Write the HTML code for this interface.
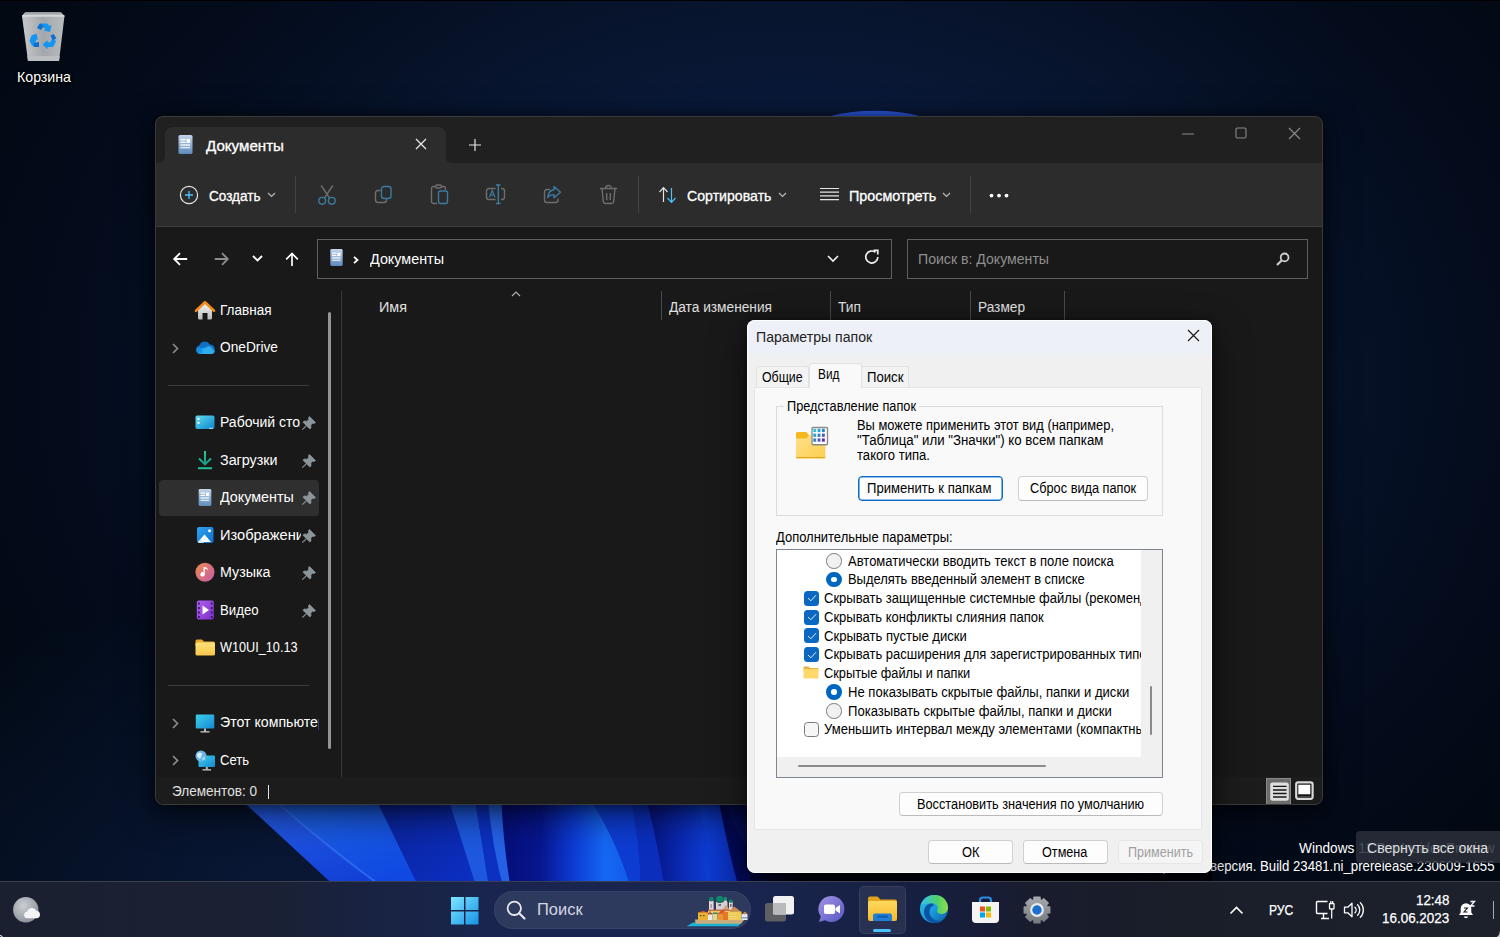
<!DOCTYPE html>
<html lang="ru">
<head>
<meta charset="utf-8">
<title>Параметры папок</title>
<style>
*{box-sizing:border-box;margin:0;padding:0}
html,body{width:1500px;height:937px;overflow:hidden;background:#050b1e}
body{position:relative;font-family:"Liberation Sans",sans-serif;font-size:14px;color:#fff}
.abs{position:absolute}
.pg{position:absolute;width:1500px;height:937px}
.t{position:absolute;white-space:nowrap;line-height:1;transform-origin:0 0}
svg{position:absolute;overflow:visible}
#desk{position:absolute;left:0;top:0;width:1500px;height:937px;overflow:hidden;
 background:radial-gradient(ellipse 520px 300px at 280px 900px,rgba(16,38,88,.5),rgba(16,38,88,0) 100%),radial-gradient(ellipse 900px 700px at 790px 380px,#0c2049 0%,#0a1a3b 35%,#07132a 58%,#040c1d 78%,#020913 100%)}
#win{position:absolute;left:155px;top:116px;width:1168px;height:689px;background:#191919;border-radius:8px;overflow:hidden;
 box-shadow:0 10px 34px rgba(0,0,0,.6),0 0 14px rgba(0,0,0,.45)}
#win:after{content:"";position:absolute;left:0;top:0;right:0;bottom:0;border:1px solid #3a3a3a;border-radius:8px;pointer-events:none}
.vsep{position:absolute;width:1px;background:#434343}
.box{position:absolute;border:1px solid #5f5f5f;background:#191919}
#dlg{position:absolute;left:747px;top:320px;width:465px;height:553px;background:#f0f0f0;border-radius:8px;overflow:hidden;color:#000;
 box-shadow:0 14px 36px rgba(0,0,0,.55),0 0 10px rgba(0,0,0,.35)}
#dlg:after{content:"";position:absolute;left:0;top:0;right:0;bottom:0;border:1px solid #fdfdfd;border-radius:8px;pointer-events:none}
.btn{position:absolute;background:#fdfdfd;border:1px solid #d0d0d0;border-bottom-color:#bababa;border-radius:4px}
.cb{position:absolute;width:15px;height:15px;border-radius:3.500px;background:#0a68c2}
.cb0{position:absolute;width:15px;height:15px;border-radius:3.500px;background:#f6f6f6;border:1px solid #7a7a7a}
.rd{position:absolute;width:15.500px;height:15.500px;border-radius:50%;background:#fff;border:5px solid #0067c0}
.rd0{position:absolute;width:15.500px;height:15.500px;border-radius:50%;background:#f1f1f1;border:1px solid #7d7d7d}
#taskbar{position:absolute;left:0;top:881px;width:1500px;height:56px;overflow:hidden;
 background:linear-gradient(90deg,#1b2030 0%,#1a2134 18%,#192240 24%,#19254e 32%,#19254e 50%,#171f40 62%,#181c2d 69%,#1a1e29 78%,#1c212c 100%);border-top:1px solid #3a3f4c}
</style>
</head>
<body>
<div id="desk">
<svg class="abs" style="left:0;top:0" width="1500" height="937" viewBox="0 0 1500 937">
<defs>
<linearGradient id="w1" x1="0" y1="0" x2=".6" y2="1"><stop offset="0" stop-color="#2660e6"/><stop offset="1" stop-color="#1240d6"/></linearGradient>
<linearGradient id="w2" x1="0" y1="0" x2=".5" y2="1"><stop offset="0" stop-color="#1f64e2"/><stop offset="1" stop-color="#1049e2"/></linearGradient>
<linearGradient id="w3" x1="0" y1="0" x2="1" y2="1"><stop offset="0" stop-color="#0a2296"/><stop offset="1" stop-color="#0c30c6"/></linearGradient>
<linearGradient id="w6" x1="0" y1="0" x2="1" y2="0"><stop offset="0" stop-color="#050e78"/><stop offset=".3" stop-color="#07168e"/><stop offset=".55" stop-color="#0c3ad2"/><stop offset=".8" stop-color="#1668f4"/><stop offset="1" stop-color="#1259ea"/></linearGradient>
<linearGradient id="w9" x1="0" y1="0" x2="1" y2="0"><stop offset="0" stop-color="#06127e"/><stop offset=".55" stop-color="#0a2ab4"/><stop offset="1" stop-color="#0e40d6"/></linearGradient>
<linearGradient id="w10" x1="0" y1="0" x2="1" y2="0"><stop offset="0" stop-color="#0e3fd6"/><stop offset="1" stop-color="#0a2cb4"/></linearGradient>
<linearGradient id="wp5" x1="0" y1="0" x2="0" y2="1"><stop offset="0" stop-color="#2a63ee"/><stop offset="1" stop-color="#0c2fb0"/></linearGradient>
</defs>
<path d="M241.5 800 L1205 800 L1205 937 L380 937 L339 890 Z" fill="#0a2aae"/>
<path d="M241.5 800 Q290.2 845 339.0 890 L386.4 890 Q324.4 845 274.5 800Z" fill="url(#w1)"/>
<path d="M274.5 800 Q324.4 845 386.4 890 L420.3 890 Q398.4 845 376.5 800Z" fill="url(#w2)"/>
<path d="M274.5 800 Q324.4 845 386.4 890" stroke="#3270f2" stroke-width="2" fill="none" opacity=".8"/>
<path d="M376.5 800 Q398.4 845 420.3 890 L477.2 890 Q463.0 845 448.8 800Z" fill="url(#w3)"/>
<path d="M448.8 800 Q463.0 845 477.2 890 L489.6 890 Q482.3 845 475.0 800Z" fill="#1d58de"/>
<path d="M475.0 800 Q482.3 845 489.6 890 L503.8 890 Q495.9 845 488.0 800Z" fill="#0c30c0"/>
<path d="M488.0 800 Q491.9 845 503.8 890 L511.0 890 Q506.2 845 501.4 800Z" fill="#2461e4"/>
<path d="M501.4 800 Q503.2 845 511.0 890 L631.5 890 Q619.1 845 590.8 800Z" fill="url(#w6)"/>
<path d="M590.8 800 Q619.1 845 631.5 890 L641.0 890 Q640.2 845 631.4 800Z" fill="#0d3cd2"/>
<path d="M631.4 800 Q640.2 845 641.0 890 L665.0 890 Q657.9 845 646.8 800Z" fill="#0b2fbc"/>
<path d="M646.8 800 Q657.9 845 665.0 890 L712.5 890 Q705.8 845 699.0 800Z" fill="url(#w9)"/>
<path d="M699.0 800 Q705.8 845 712.5 890 L739.3 890 Q729.0 845 718.6 800Z" fill="url(#w10)"/>
<path d="M718.600 800 Q727 845 739.300 890 L1205 890 L1205 800Z" fill="#030a58"/><path d="M724 800 L760 800 L760 860 Q735 835 724 800Z" fill="#050f60"/>
<linearGradient id="wsh" x1="0" y1="0" x2="1" y2="0"><stop offset="0" stop-color="rgba(2,4,40,.6)"/><stop offset=".1" stop-color="rgba(0,0,10,.92)"/><stop offset="1" stop-color="rgba(0,0,6,.96)"/></linearGradient><rect x="750" y="868" width="462" height="14" fill="url(#wsh)"/>
<ellipse cx="875" cy="127.500" rx="60" ry="16.800" fill="#2a57e2"/>
</svg>
<div class="abs" style="left:0;top:0;width:1500px;height:1px;background:#000"></div>
</div>
<svg style="left:20px;top:10px" width="46" height="54" viewBox="0 0 46 54">
<defs><linearGradient id="bin1" x1="0" y1="0" x2="1" y2="0"><stop offset="0" stop-color="#c6c9cc"/><stop offset=".5" stop-color="#a3a7ab"/><stop offset="1" stop-color="#b9bcbf"/></linearGradient>
<linearGradient id="bin2" x1="0" y1="0" x2="0" y2="1"><stop offset="0" stop-color="#8e9397"/><stop offset="1" stop-color="#c9ccd0"/></linearGradient></defs>
<path d="M2 6 L5.500 2 H40.500 L44.500 6 L39 51 H8 Z" fill="url(#bin1)"/>
<path d="M5.500 2 H40.500 L44.500 6 H2 Z" fill="url(#bin2)"/>
<path d="M7.300 46 H39.700 L39 51 H8 Z" fill="#bcbfc2"/>
<path d="M2 6 H44.500" stroke="#e6e8ea" stroke-width="1"/>
<g fill="#1496f0">
<path d="M17 18l3-4.500h7l3 2.500 1.500-1-1.500 7-6.500-1.500 2-1.200-2-2h-3.500z"/>
<path d="M11.500 25.500l5-2 1.500 6.500-1.800-.8-.7 3 2 3.500h-5.500l-2.500-5z"/>
<path d="M33 27l3 4.500-3 5.500h-5.500v2.200l-5-4.700 5-4.500v2.300h3l1-2.500z"/>
</g>
<g fill="#0a6fd0"><path d="M17 18l3-4.500 3.500 2.500-2.500 4z"/><path d="M14 33l5-1v5h-5.500z"/><path d="M30.500 25.500l3-1.500 3 4.500-4 1.500z"/></g>
</svg>
<span class="t" style="left:16.5px;top:69.7px;font-size:14.5px;color:#fff;transform:scaleX(0.9777);text-shadow:0 1px 2px #000,0 0 3px rgba(0,0,0,.9),1px 1px 1px #000;">Корзина</span>
<div id="win"><div class="pg" style="left:-155px;top:-116px">
<div class="abs" style="left:155px;top:116px;width:1168px;height:47px;background:#202020"></div>
<div class="abs" style="left:165px;top:127px;width:281px;height:37px;background:#2c2c2c;border-radius:8px 8px 0 0"></div>
<svg style="left:157px;top:155px" width="296" height="8" viewBox="0 0 296 8"><path d="M0 8h8V0q0 8-8 8z" fill="#2c2c2c"/><path d="M296 8h-8V0q0 8 8 8z" fill="#2c2c2c"/></svg>
<div class="abs" style="left:155px;top:163px;width:1168px;height:64px;background:#2c2c2c;border-bottom:1px solid #3c3c3c"></div>
<svg style="left:177px;top:133.500px" width="17" height="21" viewBox="0 0 17 21"><defs><linearGradient id="dg" x1="0" y1="0" x2="0" y2="1"><stop offset="0" stop-color="#c3d5ea"/><stop offset="1" stop-color="#5d8abb"/></linearGradient></defs><rect x="1.500" y="1" width="14" height="19" rx="1.600" fill="url(#dg)"/><rect x="3.5" y="5" width="5" height="1.3" fill="#fff"/><rect x="3.5" y="7.6" width="5" height="1.3" fill="#fff"/><rect x="9.5" y="5" width="3.5" height="3.9" fill="#fff"/><rect x="3.5" y="10.4" width="9.5" height="1.3" fill="#fff"/><rect x="3.5" y="13" width="9.5" height="1.3" fill="#fff" opacity=".8"/></svg>
<span class="t" style="left:206.0px;top:138.6px;font-size:14px;color:#fff;transform:scaleX(1.0808);-webkit-text-stroke:.3px #fff;">Документы</span>
<svg style="left:415px;top:138px" width="12" height="12" viewBox="0 0 12 12"><path d="M1 1l10 10M11 1L1 11" stroke="#e8e8e8" stroke-width="1.3" fill="none"/></svg>
<svg style="left:468px;top:138px" width="14" height="14" viewBox="0 0 14 14"><path d="M7 1v12M1 7h12" stroke="#e8e8e8" stroke-width="1.2" fill="none"/></svg>
<svg style="left:1182px;top:133px" width="12" height="2" viewBox="0 0 12 2"><path d="M0 1h12" stroke="#8a8a8a" stroke-width="1.2"/></svg>
<svg style="left:1235px;top:127px" width="12" height="12" viewBox="0 0 12 12"><rect x="1" y="1" width="10" height="10" rx="1.5" stroke="#8a8a8a" stroke-width="1.1" fill="none"/></svg>
<svg style="left:1288px;top:127px" width="13" height="13" viewBox="0 0 13 13"><path d="M1 1l11 11M12 1L1 12" stroke="#8a8a8a" stroke-width="1.1" fill="none"/></svg>
<svg style="left:179px;top:185px" width="20" height="20" viewBox="0 0 20 20"><circle cx="10" cy="10" r="8.6" stroke="#e4e4e4" stroke-width="1.2" fill="none"/><path d="M10 6v8M6 10h8" stroke="#4cc2ff" stroke-width="1.3" fill="none"/></svg>
<span class="t" style="left:208.5px;top:188.8px;font-size:14px;color:#fff;transform:scaleX(0.9677);-webkit-text-stroke:.3px #fff;">Создать</span>
<svg style="left:267px;top:192px" width="9" height="6" viewBox="0 0 9 6"><path d="M1 1l3.5 3.5L8 1" stroke="#b8b8b8" stroke-width="1.2" fill="none"/></svg>
<div class="vsep" style="left:295px;top:176px;height:37px"></div>
<svg style="left:318px;top:184px" width="18" height="21" viewBox="0 0 18 21"><path d="M3.200 1.500L11.600 14.200M14.800 1.500L6.400 14.200" stroke="#6e6e6e" stroke-width="1.400" fill="none"/><circle cx="4.200" cy="16.800" r="3.400" stroke="#3a7ba2" stroke-width="1.400" fill="none"/><circle cx="13.800" cy="16.800" r="3.400" stroke="#3a7ba2" stroke-width="1.400" fill="none"/></svg>
<svg style="left:374px;top:185px" width="19" height="19" viewBox="0 0 19 19"><path d="M6.500 5.500H4a2.500 2.500 0 0 0-2.500 2.500v7A2.500 2.500 0 0 0 4 17.500h6a2.500 2.500 0 0 0 2.500-2.500v-1" stroke="#6e6e6e" stroke-width="1.400" fill="none"/><rect x="7.500" y="1.500" width="9.500" height="12" rx="2.500" stroke="#3a7ba2" stroke-width="1.400" fill="none"/></svg>
<svg style="left:430px;top:184px" width="19" height="21" viewBox="0 0 19 21"><path d="M7 19.500H3.500a2 2 0 0 1-2-2v-13a2 2 0 0 1 2-2h2M11.500 2.500h2a2 2 0 0 1 2 2V6" stroke="#6e6e6e" stroke-width="1.400" fill="none"/><rect x="5.500" y="1" width="6" height="3" rx="1.500" stroke="#6e6e6e" stroke-width="1.400" fill="none"/><rect x="8.500" y="7" width="9" height="12.500" rx="2" stroke="#3a7ba2" stroke-width="1.400" fill="none"/></svg>
<svg style="left:485px;top:184px" width="21" height="21" viewBox="0 0 21 21"><path d="M10.500 4.500H4a2.500 2.500 0 0 0-2.500 2.500v6A2.500 2.500 0 0 0 4 15.500h6.500M16 4.500h1a2.500 2.500 0 0 1 2.500 2.500v6a2.500 2.500 0 0 1-2.500 2.500h-1" stroke="#6e6e6e" stroke-width="1.400" fill="none"/><path d="M13.300 1v18.500M11 1h4.600M11 19.500h4.600" stroke="#3a7ba2" stroke-width="1.400" fill="none"/><path d="M4.500 13.200L7.200 6.500 9.900 13.200M5.400 11h3.600" stroke="#3b7ea8" stroke-width="1.100" fill="none"/></svg>
<svg style="left:543px;top:185px" width="19" height="19" viewBox="0 0 19 19"><path d="M7 4.500H4a2.500 2.500 0 0 0-2.500 2.500v8A2.500 2.500 0 0 0 4 17.500h8.500A2.500 2.500 0 0 0 15 15v-1.500" stroke="#6e6e6e" stroke-width="1.400" fill="none"/><path d="M11 1.500l6.500 5.700L11 12.800V9.600c-3 0-5 1-6.300 3 .3-4 2.500-7.300 6.300-7.800z" stroke="#3a7ba2" stroke-width="1.400" fill="none" stroke-linejoin="round"/></svg>
<svg style="left:599px;top:184px" width="19" height="21" viewBox="0 0 19 21"><path d="M1 4.500h17M6.500 4.500a3 3 0 0 1 6 0M3 4.500l1.300 13a2.300 2.300 0 0 0 2.300 2h5.800a2.300 2.300 0 0 0 2.300-2l1.300-13M7.700 9v7M11.300 9v7" stroke="#6e6e6e" stroke-width="1.400" fill="none"/></svg>
<div class="vsep" style="left:638px;top:176px;height:37px"></div>
<svg style="left:658px;top:186px" width="20" height="18" viewBox="0 0 20 18"><path d="M5.5 16V2M1.5 6l4-4.3 4 4.3" stroke="#e4e4e4" stroke-width="1.2" fill="none"/><path d="M13.5 2v14M9.5 12l4 4.3 4-4.3" stroke="#4cc2ff" stroke-width="1.2" fill="none"/></svg>
<span class="t" style="left:686.8px;top:188.8px;font-size:14px;color:#fff;transform:scaleX(1.0101);-webkit-text-stroke:.3px #fff;">Сортировать</span>
<svg style="left:778px;top:192px" width="9" height="6" viewBox="0 0 9 6"><path d="M1 1l3.5 3.5L8 1" stroke="#b8b8b8" stroke-width="1.2" fill="none"/></svg>
<svg style="left:820px;top:187px" width="19" height="14" viewBox="0 0 19 14"><path d="M0 1.5h19M0 5.2h19M0 8.9h19M0 12.6h19" stroke="#e4e4e4" stroke-width="1.2"/></svg>
<span class="t" style="left:848.7px;top:188.8px;font-size:14px;color:#fff;transform:scaleX(1.0263);-webkit-text-stroke:.3px #fff;">Просмотреть</span>
<svg style="left:942px;top:192px" width="9" height="6" viewBox="0 0 9 6"><path d="M1 1l3.5 3.5L8 1" stroke="#b8b8b8" stroke-width="1.2" fill="none"/></svg>
<div class="vsep" style="left:970px;top:176px;height:37px"></div>
<svg style="left:989px;top:193px" width="20" height="4" viewBox="0 0 20 4"><circle cx="2.500" cy="2.600" r="1.900" fill="#fff"/><circle cx="10" cy="2.600" r="1.900" fill="#fff"/><circle cx="17.500" cy="2.600" r="1.900" fill="#fff"/></svg>
<svg style="left:173px;top:252px" width="15" height="14" viewBox="0 0 15 14"><path d="M14.200 7H1.500M7 1.200L1.200 7 7 12.800" stroke="#fff" stroke-width="1.800" fill="none"/></svg>
<svg style="left:214px;top:252px" width="15" height="14" viewBox="0 0 15 14"><path d="M.8 7h12.700M8 1.200L13.800 7 8 12.800" stroke="#8c8c8c" stroke-width="1.800" fill="none"/></svg>
<svg style="left:251.500px;top:255px" width="11" height="7" viewBox="0 0 11 7"><path d="M1 1l4.500 4.500L10 1" stroke="#fff" stroke-width="1.800" fill="none"/></svg>
<svg style="left:284.500px;top:251.500px" width="14" height="14" viewBox="0 0 14 14"><path d="M7 14V1.800M1.200 7.300L7 1.500l5.800 5.800" stroke="#fff" stroke-width="1.700" fill="none"/></svg>
<div class="box" style="left:317px;top:239px;width:575px;height:40px"></div>
<svg style="left:329px;top:248px" width="15" height="19" viewBox="0 0 17 21"><rect x="1.500" y="1" width="14" height="19" rx="1.600" fill="url(#dg)"/><rect x="3.5" y="5" width="5" height="1.3" fill="#fff"/><rect x="3.5" y="7.6" width="5" height="1.3" fill="#fff"/><rect x="9.5" y="5" width="3.5" height="3.9" fill="#fff"/><rect x="3.5" y="10.4" width="9.5" height="1.3" fill="#fff"/><rect x="3.5" y="13" width="9.5" height="1.3" fill="#fff" opacity=".8"/></svg>
<svg style="left:353px;top:255.500px" width="6" height="8" viewBox="0 0 6 8"><path d="M1 .8l3.500 3.200L1 7.200" stroke="#fff" stroke-width="1.800" fill="none"/></svg>
<span class="t" style="left:370.0px;top:252.1px;font-size:14px;color:#fff;transform:scaleX(1.0253);">Документы</span>
<svg style="left:827px;top:255px" width="12" height="7" viewBox="0 0 12 7"><path d="M1 1l5 5 5-5" stroke="#ededed" stroke-width="1.700" fill="none"/></svg>
<svg style="left:864px;top:249px" width="16" height="16" viewBox="0 0 16 16"><path d="M13.800 8a6 6 0 1 1-2.300-4.700" stroke="#ededed" stroke-width="1.700" fill="none"/><path d="M9.500 1.300h4.300v4.300" stroke="#ededed" stroke-width="1.700" fill="none"/></svg>
<div class="box" style="left:907px;top:239px;width:401px;height:40px"></div>
<span class="t" style="left:918.0px;top:252.1px;font-size:14px;color:#8f8f8f;transform:scaleX(1.0071);">Поиск в: Документы</span>
<svg style="left:1276px;top:252px" width="14" height="14" viewBox="0 0 14 14"><circle cx="8.600" cy="5.400" r="3.900" stroke="#cfcfcf" stroke-width="1.800" fill="none"/><path d="M5.600 8.400L1 13" stroke="#cfcfcf" stroke-width="2.100"/></svg>
<div class="abs" style="left:159px;top:480px;width:160px;height:36px;border-radius:4px;background:#2f2f2f"></div>
<div class="abs" style="left:328px;top:312px;width:3px;height:437px;background:#959595;border-radius:1.5px"></div>
<div class="abs" style="left:340.500px;top:291px;width:1.500px;height:487px;background:#383838"></div>
<div class="abs" style="left:168px;top:385px;width:141px;height:1px;background:#3c3c3c"></div>
<div class="abs" style="left:168px;top:685px;width:141px;height:1px;background:#3c3c3c"></div>
<svg style="left:195px;top:301px" width="20" height="20" viewBox="0 0 20 20"><defs><linearGradient id="hm" x1="0" y1="0" x2="0" y2="1"><stop offset="0" stop-color="#f4f4f4"/><stop offset="1" stop-color="#b9b9b9"/></linearGradient></defs><path d="M3 8.500L10 2.500l7 6V17a1.500 1.500 0 0 1-1.500 1.500H12.500V12h-5v6.500H4.500A1.500 1.500 0 0 1 3 17z" fill="url(#hm)"/><path d="M1 9.800L10 1.200l9 8.600" stroke="#f28a1c" stroke-width="2.600" fill="none" stroke-linejoin="round" stroke-linecap="round"/></svg>
<svg style="left:195px;top:341px" width="21" height="14" viewBox="0 0 21 14"><path d="M5 13A4.300 4.300 0 0 1 4.200 4.600 6 6 0 0 1 15 3.500 5 5 0 0 1 17 13z" fill="#0f6fc4"/><path d="M4.500 13A4.300 4.300 0 0 1 2.500 6.200L12 7.500l5 5.500z" fill="#1a8ce0"/><path d="M9 13L6 8l7.500-3a4.800 4.800 0 0 1 3.500 8z" fill="#28a8ea" opacity=".92"/><path d="M4.500 13L14 5.500l6 4.300A3.300 3.300 0 0 1 17.500 13z" fill="#3bb4f2" opacity=".55"/></svg>
<svg style="left:195px;top:415px" width="20" height="15" viewBox="0 0 20 15"><defs><linearGradient id="dk" x1="0" y1="0" x2="1" y2="1"><stop offset="0" stop-color="#62dcf4"/><stop offset="1" stop-color="#0c84c8"/></linearGradient></defs><rect x=".5" y=".5" width="19" height="13.500" rx="1.800" fill="url(#dk)"/><rect x="2.500" y="3" width="2" height="2" fill="#fff"/><rect x="2.500" y="6.800" width="2" height="2" fill="#fff"/><rect x="14.500" y="12.800" width="1.200" height="1.200" fill="#fff"/><rect x="16.500" y="12.800" width="1.200" height="1.200" fill="#fff"/></svg>
<svg style="left:197px;top:450px" width="16" height="20" viewBox="0 0 16 20"><defs><linearGradient id="dl" x1="0" y1="0" x2="0" y2="1"><stop offset="0" stop-color="#2bd6a0"/><stop offset="1" stop-color="#15a088"/></linearGradient></defs><path d="M8 1v13M2 8.500l6 6 6-6" stroke="url(#dl)" stroke-width="1.900" fill="none"/><rect x="1" y="17.200" width="14" height="2" fill="#1fbf96"/></svg>
<svg style="left:197px;top:488px" width="16" height="19" viewBox="0 0 17 21"><rect x="1.500" y="1" width="14" height="19" rx="1.600" fill="url(#dg)"/><rect x="3.500" y="5" width="5" height="1.300" fill="#fff"/><rect x="3.500" y="7.600" width="5" height="1.300" fill="#fff"/><rect x="9.500" y="5" width="3.500" height="3.900" fill="#fff"/><rect x="3.500" y="10.400" width="9.500" height="1.300" fill="#fff"/><rect x="3.500" y="13" width="9.500" height="1.300" fill="#fff" opacity=".8"/></svg>
<svg style="left:196px;top:526px" width="18" height="18" viewBox="0 0 18 18"><defs><linearGradient id="pc" x1="0" y1="0" x2="1" y2="1"><stop offset="0" stop-color="#2ea4f0"/><stop offset="1" stop-color="#0f6ed0"/></linearGradient></defs><rect x="1" y="1" width="16.500" height="16" rx="2" fill="url(#pc)"/><path d="M2 16l6.500-7.500L15 16z" fill="#fff"/><path d="M2 17l3-3.200 3 3.200z" fill="#cfe6fa"/><circle cx="13.500" cy="4.800" r="1.500" fill="#fff"/></svg>
<svg style="left:195px;top:562px" width="20" height="20" viewBox="0 0 20 20"><defs><linearGradient id="mu" x1="0" y1="0" x2="1" y2="1"><stop offset="0" stop-color="#f08a4e"/><stop offset="1" stop-color="#c25aa8"/></linearGradient></defs><circle cx="10" cy="10.300" r="9.500" fill="url(#mu)"/><path d="M9.800 5v7.300a2.200 2.200 0 1 1-1.300-2V5z" fill="#fff"/><path d="M9.800 5c1.500.3 3 1.200 3.200 3-1-.8-2-1.200-3.200-1.200z" fill="#fff"/></svg>
<svg style="left:196px;top:600px" width="18" height="20" viewBox="0 0 18 20"><defs><linearGradient id="vd" x1="0" y1="0" x2="1" y2="1"><stop offset="0" stop-color="#b060f0"/><stop offset="1" stop-color="#7a30c8"/></linearGradient></defs><rect x=".8" y=".5" width="17" height="19" rx="2" fill="url(#vd)"/><g fill="#3d1470"><rect x="2" y="2.500" width="1.800" height="2"/><rect x="2" y="7" width="1.800" height="2"/><rect x="2" y="11.500" width="1.800" height="2"/><rect x="2" y="16" width="1.800" height="2"/><rect x="14.800" y="2.500" width="1.800" height="2"/><rect x="14.800" y="7" width="1.800" height="2"/><rect x="14.800" y="11.500" width="1.800" height="2"/><rect x="14.800" y="16" width="1.800" height="2"/></g><path d="M6.500 5.500l6.500 4.500-6.500 4.500z" fill="#fff"/></svg>
<svg style="left:195px;top:639px" width="21" height="17" viewBox="0 0 21 17"><defs><linearGradient id="fd" x1="0" y1="0" x2="0" y2="1"><stop offset="0" stop-color="#ffe27a"/><stop offset="1" stop-color="#f7c64a"/></linearGradient></defs><path d="M.5 2a1.500 1.500 0 0 1 1.500-1.500h5l2 2h9.500A1.500 1.500 0 0 1 20 4v3H.5z" fill="#e8a92c"/><rect x=".5" y="3.500" width="19.500" height="13" rx="1.500" fill="url(#fd)"/></svg>
<svg style="left:195px;top:714px" width="20" height="19" viewBox="0 0 20 19"><defs><linearGradient id="pc2" x1="0" y1="0" x2="1" y2="1"><stop offset="0" stop-color="#3dd0ea"/><stop offset="1" stop-color="#1688d4"/></linearGradient></defs><rect x=".8" y=".5" width="18.500" height="14" rx="1.200" fill="url(#pc2)"/><rect x="9" y="14.500" width="2" height="3" fill="#b8bcc0"/><rect x="5.500" y="17.200" width="9" height="1.300" fill="#c8ccd0"/></svg>
<svg style="left:195px;top:750px" width="21" height="21" viewBox="0 0 21 21"><rect x="3.500" y="5.500" width="16.500" height="11.500" rx="1" fill="url(#pc2)"/><rect x="10.800" y="17" width="2" height="2.500" fill="#b8bcc0"/><rect x="7.500" y="19.200" width="8.500" height="1.300" fill="#c8ccd0"/><circle cx="6" cy="6" r="5.500" fill="#6cb6e6"/><path d="M2.500 3.500c1.500-1.500 4-1 4.500.5s-1.500 2-1.200 3.300-1.800 1.500-2.800.2S1.500 4.800 2.500 3.500z" fill="#d6ecfa"/><path d="M8 7.500c1-.5 2.200 0 2 1s-1 1.800-2 1.300S7.200 8 8 7.500z" fill="#b4dcf4"/></svg>
<span class="t" style="left:220.0px;top:302.8px;font-size:14px;color:#fff;transform:scaleX(0.9663);">Главная</span>
<span class="t" style="left:220.0px;top:340.3px;font-size:14px;color:#fff;transform:scaleX(0.9807);">OneDrive</span>
<span class="abs" style="left:220.0px;top:413.3px;width:80px;height:20px;overflow:hidden"><span class="t" style="left:0;top:2px;font-size:14px;color:#fff;transform:scaleX(1.0000);">Рабочий стол</span></span>
<span class="t" style="left:220.0px;top:452.8px;font-size:14px;color:#fff;transform:scaleX(1.0223);">Загрузки</span>
<span class="t" style="left:220.0px;top:490.3px;font-size:14px;color:#fff;transform:scaleX(1.0226);">Документы</span>
<span class="abs" style="left:220.0px;top:525.8px;width:80.5px;height:20px;overflow:hidden"><span class="t" style="left:0;top:2px;font-size:14px;color:#fff;transform:scaleX(1.0447);">Изображения</span></span>
<span class="t" style="left:220.0px;top:565.3px;font-size:14px;color:#fff;transform:scaleX(1.0196);">Музыка</span>
<span class="t" style="left:220.0px;top:602.8px;font-size:14px;color:#fff;transform:scaleX(0.9436);">Видео</span>
<span class="t" style="left:220.0px;top:640.3px;font-size:14px;color:#fff;transform:scaleX(0.9053);">W10UI_10.13</span>
<span class="abs" style="left:220.0px;top:713.3px;width:98.5px;height:20px;overflow:hidden"><span class="t" style="left:0;top:2px;font-size:14px;color:#fff;transform:scaleX(1.0113);">Этот компьютер</span></span>
<span class="t" style="left:220.0px;top:752.8px;font-size:14px;color:#fff;transform:scaleX(0.9313);">Сеть</span>
<svg style="left:172px;top:342.5px" width="7" height="11" viewBox="0 0 7 11"><path d="M1 1l4.5 4.5L1 10" stroke="#8c8c8c" stroke-width="1.700" fill="none"/></svg>
<svg style="left:172px;top:717.5px" width="7" height="11" viewBox="0 0 7 11"><path d="M1 1l4.5 4.5L1 10" stroke="#8c8c8c" stroke-width="1.700" fill="none"/></svg>
<svg style="left:172px;top:755px" width="7" height="11" viewBox="0 0 7 11"><path d="M1 1l4.5 4.5L1 10" stroke="#8c8c8c" stroke-width="1.700" fill="none"/></svg>
<svg style="left:302px;top:416.0px" width="14" height="14" viewBox="0 0 14 14"><path d="M7.500 .5L13.500 6.500 12 7.600 10.500 7.300 8.800 9 9 12 7.800 13 4.600 9.800 1 13.400 .5 13.500 .6 13 4.200 9.400 1 6.200 2 5 5 5.200 6.800 3.500 6.400 2z" fill="#8c959b" stroke="#8c959b" stroke-width=".7" stroke-linejoin="round"/></svg>
<svg style="left:302px;top:453.5px" width="14" height="14" viewBox="0 0 14 14"><path d="M7.500 .5L13.500 6.500 12 7.600 10.500 7.300 8.800 9 9 12 7.800 13 4.600 9.800 1 13.400 .5 13.500 .6 13 4.200 9.400 1 6.200 2 5 5 5.200 6.800 3.500 6.400 2z" fill="#8c959b" stroke="#8c959b" stroke-width=".7" stroke-linejoin="round"/></svg>
<svg style="left:302px;top:491.0px" width="14" height="14" viewBox="0 0 14 14"><path d="M7.500 .5L13.500 6.500 12 7.600 10.500 7.300 8.800 9 9 12 7.800 13 4.600 9.800 1 13.400 .5 13.500 .6 13 4.200 9.400 1 6.200 2 5 5 5.200 6.800 3.500 6.400 2z" fill="#8c959b" stroke="#8c959b" stroke-width=".7" stroke-linejoin="round"/></svg>
<svg style="left:302px;top:528.5px" width="14" height="14" viewBox="0 0 14 14"><path d="M7.500 .5L13.500 6.500 12 7.600 10.500 7.300 8.800 9 9 12 7.800 13 4.600 9.800 1 13.400 .5 13.500 .6 13 4.200 9.400 1 6.200 2 5 5 5.200 6.800 3.500 6.400 2z" fill="#8c959b" stroke="#8c959b" stroke-width=".7" stroke-linejoin="round"/></svg>
<svg style="left:302px;top:566.0px" width="14" height="14" viewBox="0 0 14 14"><path d="M7.500 .5L13.500 6.500 12 7.600 10.500 7.300 8.800 9 9 12 7.800 13 4.600 9.800 1 13.400 .5 13.500 .6 13 4.200 9.400 1 6.200 2 5 5 5.200 6.800 3.500 6.400 2z" fill="#8c959b" stroke="#8c959b" stroke-width=".7" stroke-linejoin="round"/></svg>
<svg style="left:302px;top:603.5px" width="14" height="14" viewBox="0 0 14 14"><path d="M7.500 .5L13.500 6.500 12 7.600 10.500 7.300 8.800 9 9 12 7.800 13 4.600 9.800 1 13.400 .5 13.500 .6 13 4.200 9.400 1 6.200 2 5 5 5.200 6.800 3.500 6.400 2z" fill="#8c959b" stroke="#8c959b" stroke-width=".7" stroke-linejoin="round"/></svg>
<svg style="left:511px;top:291px" width="10" height="6" viewBox="0 0 10 6"><path d="M1 5l4-4 4 4" stroke="#b0b0b0" stroke-width="1.1" fill="none"/></svg>
<div class="abs" style="left:661px;top:291px;width:1px;height:29px;background:#4a4a4a"></div>
<div class="abs" style="left:830px;top:291px;width:1px;height:29px;background:#4a4a4a"></div>
<div class="abs" style="left:970px;top:291px;width:1px;height:29px;background:#4a4a4a"></div>
<div class="abs" style="left:1064px;top:291px;width:1px;height:29px;background:#4a4a4a"></div>
<span class="t" style="left:378.6px;top:299.8px;font-size:14px;color:#e0e0e0;transform:scaleX(1.0263);">Имя</span>
<span class="t" style="left:669.0px;top:299.8px;font-size:14px;color:#e0e0e0;transform:scaleX(0.9791);">Дата изменения</span>
<span class="t" style="left:838.0px;top:299.8px;font-size:14px;color:#e0e0e0;transform:scaleX(0.9853);">Тип</span>
<span class="t" style="left:978.0px;top:299.8px;font-size:14px;color:#e0e0e0;transform:scaleX(0.9766);">Размер</span>
<div class="abs" style="left:155px;top:777px;width:1168px;height:28px;background:#1c1c1c"></div>
<span class="t" style="left:172.0px;top:784.1px;font-size:14px;color:#e0e0e0;transform:scaleX(0.9687);">Элементов: 0</span>
<div class="abs" style="left:267.500px;top:784.500px;width:1.600px;height:14px;background:#e4e4e4"></div>
<div class="abs" style="left:1266px;top:778px;width:25px;height:28px;background:#6c6c6c;border:1px solid #8a8a8a"></div>
<svg style="left:1270px;top:782px" width="19" height="19" viewBox="0 0 19 19"><rect x=".2" y=".4" width="18.600" height="18.400" rx="2.500" fill="#dedede"/><path d="M3 4.400h13.600M3 8h13.600M3 11.500h13.600M3 15h13.600" stroke="#161616" stroke-width="1.300"/></svg>
<svg style="left:1295px;top:781px" width="19" height="19" viewBox="0 0 19 19"><rect x="1.200" y="1.300" width="16.400" height="16.500" rx="2" fill="#111" stroke="#d9d9d9" stroke-width="2.200"/><rect x="3.300" y="3.700" width="12" height="9.600" fill="#fff"/><rect x="3.300" y="15.200" width="12" height="1.300" fill="#555"/></svg>
</div></div>
<span class="t" style="left:1298.9px;top:841.1px;font-size:14.5px;color:#fff;transform:scaleX(0.9415);">Windows 11 Pro Insider Preview</span>
<span class="t" style="left:1152.5px;top:858.6px;font-size:14.5px;color:#fff;transform:scaleX(0.9089);">Пробная версия. Build 23481.ni_prerelease.230609-1655</span>
<div class="abs" style="left:1356px;top:831px;width:150px;height:32px;border-radius:4px;background:rgba(42,47,58,.86)"></div>
<span class="t" style="left:1366.5px;top:841.1px;font-size:14.5px;color:rgba(255,255,255,.85);transform:scaleX(0.9680);">Свернуть все окна</span>
<div id="dlg"><div class="pg" style="left:-747px;top:-320px">
<div class="abs" style="left:747px;top:320px;width:465px;height:35px;background:#eef0f7"></div>
<span class="t" style="left:756.0px;top:330.3px;font-size:14px;color:#222;transform:scaleX(1.0070);">Параметры папок</span>
<svg style="left:1187px;top:329px" width="13" height="13" viewBox="0 0 13 13"><path d="M1 1l11 11M12 1L1 12" stroke="#1a1a1a" stroke-width="1.2" fill="none"/></svg>
<div class="abs" style="left:754px;top:387px;width:448px;height:443px;background:#f9f9f9;border:1px solid #e6e6e6"></div>
<div class="abs" style="left:756px;top:366px;width:53px;height:21px;background:#f3f3f3;border:1px solid #e2e2e2;border-bottom:none;border-radius:3px 3px 0 0"></div>
<div class="abs" style="left:861px;top:366px;width:48px;height:21px;background:#f3f3f3;border:1px solid #e2e2e2;border-bottom:none;border-radius:3px 3px 0 0"></div>
<div class="abs" style="left:809px;top:363px;width:53px;height:25px;background:#f9f9f9;border:1px solid #e2e2e2;border-bottom:none;border-radius:3px 3px 0 0"></div>
<span class="t" style="left:762.4px;top:369.7px;font-size:14px;color:#000;transform:scaleX(0.8817);">Общие</span>
<span class="t" style="left:818.4px;top:367.1px;font-size:14px;color:#000;transform:scaleX(0.8449);">Вид</span>
<span class="t" style="left:867.4px;top:369.7px;font-size:14px;color:#000;transform:scaleX(0.9382);">Поиск</span>
<div class="abs" style="left:776px;top:406px;width:387px;height:110px;border:1px solid #dcdcdc"></div>
<div class="abs" style="left:784px;top:400px;width:135px;height:14px;background:#f9f9f9"></div>
<span class="t" style="left:787.0px;top:399.1px;font-size:14px;color:#000;transform:scaleX(0.9104);">Представление папок</span>
<svg style="left:795px;top:426px" width="35" height="34" viewBox="0 0 35 34"><defs><linearGradient id="df" x1="0" y1="0" x2="1" y2="1"><stop offset="0" stop-color="#ffe08a"/><stop offset="1" stop-color="#fccf4e"/></linearGradient></defs>
<path d="M1 7.500a1.500 1.500 0 0 1 1.500-1.500h9l2.500 3.500h16v4H1z" fill="#f5b81e"/><path d="M1 12.500h10.500l2.500-3h16.300v21.700a1.500 1.500 0 0 1-1.500 1.500H2.500a1.500 1.500 0 0 1-1.500-1.500z" fill="url(#df)"/><path d="M1 31.500h29.300" stroke="#dfa62a" stroke-width="1"/>
<rect x="16.300" y=".8" width="16.500" height="18" rx="1.200" fill="#fff"/><rect x="17" y="1.500" width="15.500" height="17.200" rx="1" fill="#fff" stroke="#8a8a8a" stroke-width="1.400"/><rect x="18.3" y="2.8" width="2.900" height="3.300" fill="#2fc4d4"/><rect x="22.6" y="2.8" width="2.900" height="3.300" fill="#2e9fd0"/><rect x="26.9" y="2.8" width="2.900" height="3.300" fill="#2c86cc"/><rect x="18.3" y="7.6" width="2.900" height="3.300" fill="#2f9fd0"/><rect x="22.6" y="7.6" width="2.900" height="3.300" fill="#3a80c8"/><rect x="26.9" y="7.6" width="2.900" height="3.300" fill="#4a60b8"/><rect x="18.3" y="12.4" width="2.900" height="3.300" fill="#3a7cc8"/><rect x="22.6" y="12.4" width="2.900" height="3.300" fill="#4a5cc0"/><rect x="26.9" y="12.4" width="2.900" height="3.300" fill="#6a2aa8"/></svg>
<span class="t" style="left:856.8px;top:418.3px;font-size:14px;color:#000;transform:scaleX(0.9193);">Вы можете применить этот вид (например,</span>
<span class="t" style="left:856.8px;top:433.3px;font-size:14px;color:#000;transform:scaleX(0.9471);">"Таблица" или "Значки") ко всем папкам</span>
<span class="t" style="left:856.8px;top:447.9px;font-size:14px;color:#000;transform:scaleX(0.9350);">такого типа.</span>
<div class="btn" style="left:858px;top:476px;width:145px;height:25px;border:1px solid #0a6ac4;box-shadow:inset 0 0 0 .6px #2a80d0"></div>
<span class="t" style="left:867.4px;top:480.7px;font-size:14px;color:#000;transform:scaleX(0.9350);">Применить к папкам</span>
<div class="btn" style="left:1018px;top:476px;width:130px;height:25px"></div>
<span class="t" style="left:1029.6px;top:480.7px;font-size:14px;color:#000;transform:scaleX(0.9111);">Сброс вида папок</span>
<span class="t" style="left:776.0px;top:529.9px;font-size:14px;color:#000;transform:scaleX(0.9263);">Дополнительные параметры:</span>
<div class="abs" style="left:776px;top:549px;width:387px;height:229px;background:#f0f0f0;border:1px solid #7f8792"></div>
<div class="abs" style="left:777px;top:550px;width:364px;height:207px;background:#fff"></div>
<div class="abs" style="left:1150px;top:686px;width:2px;height:49px;background:#8a8a8a;border-radius:1px"></div>
<div class="abs" style="left:798px;top:765px;width:248px;height:2px;background:#8a8a8a;border-radius:1px"></div>
<div class="rd0" style="left:826px;top:553.2px"></div>
<span class="t" style="left:847.6px;top:553.6px;font-size:14px;color:#000;transform:scaleX(0.9300);">Автоматически вводить текст в поле поиска</span>
<div class="rd" style="left:826px;top:571.9px"></div>
<span class="t" style="left:847.6px;top:572.4px;font-size:14px;color:#000;transform:scaleX(0.9222);">Выделять введенный элемент в списке</span>
<div class="cb" style="left:804px;top:590.9px"><svg style="left:2.500px;top:3.500px" width="10" height="8" viewBox="0 0 10 8"><path d="M1 4l2.800 2.800L9 1.200" stroke="#e4effa" stroke-width="1" fill="none"/></svg></div>
<span class="abs" style="left:824.4px;top:589.1px;width:316.5px;height:20px;overflow:hidden"><span class="t" style="left:0;top:2px;font-size:14px;color:#000;transform:scaleX(0.9300);">Скрывать защищенные системные файлы (рекомендуется)</span></span>
<div class="cb" style="left:804px;top:609.6px"><svg style="left:2.500px;top:3.500px" width="10" height="8" viewBox="0 0 10 8"><path d="M1 4l2.800 2.800L9 1.200" stroke="#e4effa" stroke-width="1" fill="none"/></svg></div>
<span class="t" style="left:824.4px;top:609.9px;font-size:14px;color:#000;transform:scaleX(0.9292);">Скрывать конфликты слияния папок</span>
<div class="cb" style="left:804px;top:628.3px"><svg style="left:2.500px;top:3.500px" width="10" height="8" viewBox="0 0 10 8"><path d="M1 4l2.800 2.800L9 1.200" stroke="#e4effa" stroke-width="1" fill="none"/></svg></div>
<span class="t" style="left:824.4px;top:628.6px;font-size:14px;color:#000;transform:scaleX(0.9336);">Скрывать пустые диски</span>
<div class="cb" style="left:804px;top:647.1px"><svg style="left:2.500px;top:3.500px" width="10" height="8" viewBox="0 0 10 8"><path d="M1 4l2.800 2.800L9 1.200" stroke="#e4effa" stroke-width="1" fill="none"/></svg></div>
<span class="abs" style="left:824.4px;top:645.3px;width:316.5px;height:20px;overflow:hidden"><span class="t" style="left:0;top:2px;font-size:14px;color:#000;transform:scaleX(0.9300);">Скрывать расширения для зарегистрированных типов файлов</span></span>
<svg style="left:803px;top:666.3px" width="16" height="13" viewBox="0 0 16 13"><path d="M0.500 1.500q0-1 1-1h4l1.500 1.500h7.500q1 0 1 1v2h-15z" fill="#e9b43c"/><rect x=".5" y="3" width="15" height="9.500" rx="1" fill="#ffd76a"/></svg>
<span class="t" style="left:824.4px;top:666.1px;font-size:14px;color:#000;transform:scaleX(0.9132);">Скрытые файлы и папки</span>
<div class="rd" style="left:826px;top:684.3px"></div>
<span class="t" style="left:847.6px;top:684.8px;font-size:14px;color:#000;transform:scaleX(0.9326);">Не показывать скрытые файлы, папки и диски</span>
<div class="rd0" style="left:826px;top:703.1px"></div>
<span class="t" style="left:847.6px;top:703.5px;font-size:14px;color:#000;transform:scaleX(0.9340);">Показывать скрытые файлы, папки и диски</span>
<div class="cb0" style="left:804px;top:722.0px"></div>
<span class="abs" style="left:824.4px;top:720.3px;width:316.5px;height:20px;overflow:hidden"><span class="t" style="left:0;top:2px;font-size:14px;color:#000;transform:scaleX(0.9300);">Уменьшить интервал между элементами (компактный вид)</span></span>
<div class="btn" style="left:899px;top:792px;width:264px;height:24px"></div>
<span class="t" style="left:916.6px;top:796.5px;font-size:14px;color:#000;transform:scaleX(0.9107);">Восстановить значения по умолчанию</span>
<div class="btn" style="left:928px;top:840px;width:85px;height:24px"></div>
<span class="t" style="left:961.8px;top:845.1px;font-size:14px;color:#000;transform:scaleX(0.9240);">ОК</span>
<div class="btn" style="left:1023px;top:840px;width:85px;height:24px"></div>
<span class="t" style="left:1042.4px;top:845.1px;font-size:14px;color:#000;transform:scaleX(0.9038);">Отмена</span>
<div class="btn" style="left:1118px;top:840px;width:85px;height:24px;background:#f5f5f5;border-color:#e6e6e6"></div>
<span class="t" style="left:1127.8px;top:845.1px;font-size:14px;color:#a0a0a0;transform:scaleX(0.8985);">Применить</span>
</div></div>
<div id="taskbar"><div class="pg" style="left:0;top:-881px">
<svg style="left:11px;top:894px" width="32" height="32" viewBox="0 0 32 32"><defs><radialGradient id="mn" cx=".4" cy=".35" r=".7"><stop offset="0" stop-color="#ccd0d5"/><stop offset="1" stop-color="#8b9098"/></radialGradient></defs>
<circle cx="14.800" cy="14.800" r="12.700" fill="url(#mn)"/>
<path d="M16.500 23.200a3.200 3.200 0 0 1-.3-6.400 4.900 4.900 0 0 1 9.200-1.100 3.800 3.800 0 0 1 .6 7.500z" fill="#f4f4f6"/></svg>
<svg style="left:451px;top:896px" width="28" height="28" viewBox="0 0 28 28"><defs><linearGradient id="st" x1="0" y1="0" x2="1" y2="1"><stop offset="0" stop-color="#7fe6ff"/><stop offset="1" stop-color="#1592e6"/></linearGradient></defs>
<path d="M0 0h13v13H0zM14.500 0h13v13h-13zM0 14.500h13v13H0zM14.500 14.500h13v13h-13z" fill="url(#st)"/></svg>
<div class="abs" style="left:494px;top:890px;width:257px;height:38px;border-radius:19px;background:rgba(255,255,255,.095);border:1px solid rgba(255,255,255,.05)"></div>
<svg style="left:505px;top:898px" width="22" height="22" viewBox="0 0 22 22"><circle cx="9.300" cy="9.300" r="6.700" stroke="#e6e8ee" stroke-width="1.800" fill="none"/><path d="M14.200 14.200L19.500 19.500" stroke="#e6e8ee" stroke-width="2.200" stroke-linecap="round"/></svg>
<span class="t" style="left:537.2px;top:900.5px;font-size:16px;color:#d4d7e2;transform:scaleX(1.0283);">Поиск</span>
<svg style="left:686px;top:893px" width="64" height="34" viewBox="0 0 64 34"><path d="M7.0 28.5 L56.0 28.5 L52.0 32.3 L0.5 32.3Z" fill="#1ab2d6"/><path d="M9.0 25.6 L58.5 25.6 L55.0 29.8 L9.5 29.8Z" fill="#c9ab7c"/><rect x="23.0" y="7.0" width="4.6" height="9.0" fill="#e6d6cf"/><ellipse cx="25.3" cy="5.3" rx="2.4" ry="2.3" fill="#11876a"/><rect x="30.0" y="8.0" width="11.5" height="8.0" fill="#d9ced2"/><ellipse cx="33.7" cy="5.3" rx="3.7" ry="3.6" fill="#0f8468"/><rect x="31.0" y="7.3" width="5.5" height="1.3" fill="#0c6c56"/><ellipse cx="39.3" cy="4.8" rx="1.8" ry="2" fill="#15906f"/><rect x="37.8" y="6.5" width="3.2" height="2.5" fill="#d9ced2"/><rect x="43.0" y="8.0" width="3.6" height="8.5" fill="#efdcd2"/><ellipse cx="44.8" cy="7.2" rx="1.9" ry="1.7" fill="#14896b"/><rect x="44.2" y="10.0" width="1.2" height="3.0" fill="#5a4a50"/><rect x="24.5" y="10.0" width="1.5" height="4.0" fill="#a89aa0"/><rect x="32.5" y="10.0" width="2.5" height="2.0" fill="#6a6a7a"/><path d="M36.0 16.0 L40.0 11.0 L44.0 16.0Z" fill="#cfa080"/><path d="M43.0 17.5 L48.0 12.5 L51.0 14.5 L55.0 18.0Z" fill="#c98a52"/><rect x="22.0" y="15.6" width="22.0" height="1.2" fill="#d0603a"/><rect x="22.0" y="16.8" width="22.0" height="2.2" fill="#f0cc6a"/><path d="M12.0 19.0 L17.0 16.5 L22.0 19.0Z" fill="#c8502a"/><rect x="12.0" y="18.5" width="10.0" height="7.5" fill="#e9b233"/><rect x="14.0" y="21.0" width="1.5" height="1.2" fill="#5a4210"/><rect x="17.0" y="21.0" width="1.5" height="1.2" fill="#5a4210"/><path d="M22.0 21.0 L24.0 16.8 L26.3 21.0Z" fill="#d2552c"/><rect x="22.0" y="20.5" width="4.3" height="5.5" fill="#ece8ee"/><rect x="26.3" y="19.0" width="5.2" height="7.0" fill="#dcd890"/><rect x="27.0" y="18.5" width="4.5" height="1.5" fill="#2a8a6a"/><path d="M31.5 20.0 L36.0 15.5 L42.0 20.0Z" fill="#d65a28"/><rect x="31.5" y="19.8" width="10.5" height="6.2" fill="#ea9636"/><rect x="37.0" y="18.0" width="5.0" height="8.0" fill="#e07a28"/><rect x="42.0" y="17.5" width="13.5" height="8.5" fill="#f1ca52"/><rect x="43.0" y="19.5" width="7.0" height="0.8" fill="#e8dca0"/><rect x="43.0" y="22.0" width="7.0" height="0.8" fill="#e8dca0"/><rect x="43.0" y="24.3" width="7.0" height="0.7" fill="#e8dca0"/><path d="M55.5 20.5 L59.0 17.5 L62.0 20.5Z" fill="#c98a52"/><rect x="55.5" y="20.2" width="6.0" height="5.8" fill="#e6eaf2"/><rect x="55.5" y="23.5" width="6.0" height="0.8" fill="#3a5a9a"/></svg>
<svg style="left:764px;top:893.800px" width="31" height="28" viewBox="0 0 31 28"><rect x="1" y="8" width="21" height="18.500" rx="2.500" fill="#5d5f63"/><rect x="9" y="1" width="21" height="18.500" rx="2.500" fill="#f1f1f1"/><rect x="9" y="8" width="13" height="11.500" fill="#b9babc"/></svg>
<svg style="left:815.500px;top:893.300px" width="30" height="30" viewBox="0 0 30 30"><defs><linearGradient id="ch" x1="0" y1="0" x2="1" y2="1"><stop offset="0" stop-color="#a294e4"/><stop offset="1" stop-color="#5557c4"/></linearGradient></defs>
<path d="M15.500 2a13 13 0 1 1-6.500 24.300L3 28l1.800-5.500A13 13 0 0 1 15.500 2z" fill="url(#ch)"/><rect x="8" y="10.500" width="11" height="9.500" rx="1.800" fill="#fff"/><path d="M19.500 14l4.500-3v8.500l-4.500-3z" fill="#fff"/></svg>
<div class="abs" style="left:859px;top:885px;width:47px;height:48px;border-radius:5px;background:rgba(255,255,255,.075);border:1px solid rgba(255,255,255,.07)"></div>
<svg style="left:867px;top:894px" width="31" height="27" viewBox="0 0 31 27"><defs><linearGradient id="fx" x1="0" y1="0" x2="0" y2="1"><stop offset="0" stop-color="#ffd95e"/><stop offset="1" stop-color="#f5b92e"/></linearGradient></defs>
<path d="M1 3.500a2 2 0 0 1 2-2h7.500l3 3H28a2 2 0 0 1 2 2V8H1z" fill="#e3a31d"/><rect x="1" y="6" width="29" height="20" rx="2" fill="url(#fx)"/>
<path d="M6 26v-5.500a2 2 0 0 1 2-2h15a2 2 0 0 1 2 2V26z" fill="#1f7ed6"/><rect x="10" y="20.500" width="11" height="2.300" rx="1.100" fill="#0e5fb0"/></svg>
<div class="abs" style="left:873px;top:928px;width:18px;height:3px;border-radius:1.500px;background:#4cc2ff"></div>
<svg style="left:919px;top:892.500px" width="30" height="30" viewBox="0 0 30 30"><defs><linearGradient id="eg1" x1="0" y1="0" x2="1" y2="1"><stop offset="0" stop-color="#2bc3d2"/><stop offset=".5" stop-color="#1b9de2"/><stop offset="1" stop-color="#0c59a4"/></linearGradient>
<linearGradient id="eg2" x1="0" y1="0" x2="1" y2="0"><stop offset="0" stop-color="#35c1f1"/><stop offset=".6" stop-color="#4fd16a"/><stop offset="1" stop-color="#8fdc4a"/></linearGradient></defs>
<circle cx="15" cy="15" r="14" fill="url(#eg1)"/>
<path d="M2 11C4 4 10 1 15.500 1 24 1 29 7.500 29 13.500c0 4-3 6.500-6.500 6.500-3 0-4.500-1.500-4.500-3 0-1 .8-1.500 .8-3 0-2.500-2.500-5-6-5C8 9 4 10 2 11z" fill="url(#eg2)"/>
<path d="M12.500 9.500c-4 0-7.500 3.500-7.500 8.500 0 6 5 11 11.500 11 3 0 5.500-1 7.500-2.800-7 2.500-13.500-2.500-13.500-8.500 0-3 1.500-5.500 4.500-6.500-.8-1-1.500-1.700-2.500-1.700z" fill="#0b55a0"/></svg>
<svg style="left:971px;top:893.800px" width="29" height="29" viewBox="0 0 29 29"><path d="M9 8V5.500a3 3 0 0 1 3-3h5a3 3 0 0 1 3 3V8" stroke="#2a8ee0" stroke-width="2.200" fill="none"/><path d="M1 7h27v17a4 4 0 0 1-4 4H5a4 4 0 0 1-4-4z" fill="#f4f4f4"/>
<rect x="9" y="11.500" width="5" height="5" fill="#f25022"/><rect x="15" y="11.500" width="5" height="5" fill="#7fba00"/><rect x="9" y="17.500" width="5" height="5" fill="#00a4ef"/><rect x="15" y="17.500" width="5" height="5" fill="#ffb900"/></svg>
<svg style="left:1022px;top:893.600px" width="30" height="30" viewBox="0 0 30 30"><defs><linearGradient id="gr" x1="0" y1="0" x2="0" y2="1"><stop offset="0" stop-color="#a6a9ad"/><stop offset="1" stop-color="#76797e"/></linearGradient></defs><path d="M12.04 2.34 L17.96 2.34 L18.07 5.06 L19.85 5.80 L21.85 3.95 L26.05 8.15 L24.20 10.15 L24.94 11.93 L27.66 12.04 L27.66 17.96 L24.94 18.07 L24.20 19.85 L26.05 21.85 L21.85 26.05 L19.85 24.20 L18.07 24.94 L17.96 27.66 L12.04 27.66 L11.93 24.94 L10.15 24.20 L8.15 26.05 L3.95 21.85 L5.80 19.85 L5.06 18.07 L2.34 17.96 L2.34 12.04 L5.06 11.93 L5.80 10.15 L3.95 8.15 L8.15 3.95 L10.15 5.80 L11.93 5.06Z" fill="url(#gr)" stroke="url(#gr)" stroke-width="1.600" stroke-linejoin="round"/><circle cx="15" cy="15" r="5.800" fill="#1a6fd0" stroke="#e8eaec" stroke-width="2.200"/></svg>
<svg style="left:1229px;top:904px" width="15" height="10" viewBox="0 0 15 10"><path d="M1.500 8.500l6-6 6 6" stroke="#fff" stroke-width="1.600" fill="none"/></svg>
<span class="t" style="left:1268.5px;top:902.1px;font-size:14px;color:#fff;transform:scaleX(0.8664);-webkit-text-stroke:.25px #fff;">РУС</span>
<svg style="left:1315px;top:898px" width="21" height="21" viewBox="0 0 21 21"><path d="M12.500 2.500H2.500a1 1 0 0 0-1 1v10a1 1 0 0 0 1 1h10M6 19.500h8M8.500 14.500v5" stroke="#fff" stroke-width="1.400" fill="none"/><rect x="14.500" y="4.500" width="4.500" height="5.500" rx=".8" stroke="#fff" stroke-width="1.300" fill="none"/><path d="M15.800 2v2.500M17.700 2v2.500M16.700 10v9.500" stroke="#fff" stroke-width="1.200"/></svg>
<svg style="left:1343px;top:900px" width="22" height="18" viewBox="0 0 22 18"><path d="M1.500 6.200h3.300L9 2.200v13.600L4.800 11.800H1.500z" stroke="#fff" stroke-width="1.300" fill="none" stroke-linejoin="round"/><path d="M12 6.200a4 4 0 0 1 0 5.600M14.600 3.800a7.300 7.300 0 0 1 0 10.400M17.300 1.600a10.500 10.500 0 0 1 0 14.800" stroke="#fff" stroke-width="1.300" fill="none" stroke-linecap="round"/></svg>
<span class="t" style="left:1416.0px;top:891.7px;font-size:14px;color:#fff;transform:scaleX(0.9530);-webkit-text-stroke:.25px #fff;">12:48</span>
<span class="t" style="left:1382.2px;top:910.3px;font-size:14px;color:#fff;transform:scaleX(0.9589);-webkit-text-stroke:.25px #fff;">16.06.2023</span>
<svg style="left:1458px;top:899px" width="19" height="20" viewBox="0 0 19 20"><path d="M8 3.200a5.300 5.300 0 0 1 5.300 5.300v4l1.700 2.500H1l1.700-2.500v-4A5.300 5.300 0 0 1 8 3.200z" fill="#fff"/><path d="M5.800 16.500a2.300 2.300 0 0 0 4.400 0z" fill="#fff"/><path d="M12.500 1.500h4l-4 4.500h4" stroke="#fff" stroke-width="1.300" fill="none"/><path d="M6 8h3.500L6 12h3.500" stroke="#13151c" stroke-width="1.100" fill="none"/></svg>
<div class="abs" style="left:1493px;top:900px;width:1.300px;height:18px;background:#a8a8a8"></div>
<svg style="left:0;top:881px" width="1500" height="56" viewBox="0 0 1500 56"><path d="M0 56V48Q0 56 8 56z" fill="#1e1e1e"/><path d="M1500 56V48Q1500 56 1492 56z" fill="#cdcdcd"/><path d="M0 53.500a2.500 2.500 0 0 1 2.500 2.500" stroke="#fff" stroke-width="1" fill="none"/></svg>
</div></div>
</body>
</html>
